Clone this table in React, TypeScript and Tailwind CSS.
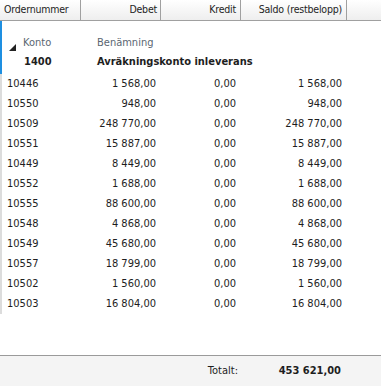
import React from "react";

const rows: [string, string, string, string][] = [
  ["10446", "1 568,00", "0,00", "1 568,00"],
  ["10550", "948,00", "0,00", "948,00"],
  ["10509", "248 770,00", "0,00", "248 770,00"],
  ["10551", "15 887,00", "0,00", "15 887,00"],
  ["10449", "8 449,00", "0,00", "8 449,00"],
  ["10552", "1 688,00", "0,00", "1 688,00"],
  ["10555", "88 600,00", "0,00", "88 600,00"],
  ["10548", "4 868,00", "0,00", "4 868,00"],
  ["10549", "45 680,00", "0,00", "45 680,00"],
  ["10557", "18 799,00", "0,00", "18 799,00"],
  ["10502", "1 560,00", "0,00", "1 560,00"],
  ["10503", "16 804,00", "0,00", "16 804,00"],
];

export default function App() {
  return (
    <div
      className="w-[381px] h-[386px] bg-white flex flex-col text-[11px] text-[#1e1e1e] overflow-hidden"
      style={{ fontFamily: '"DejaVu Sans Condensed", "DejaVu Sans", sans-serif' }}
    >
      {/* Header */}
      <div className="h-[21px] flex shrink-0 border-b border-[#a0a0a0] bg-gradient-to-b from-white to-[#eeeeee] text-[10.5px] tracking-[-0.2px]">
        <div className="w-[81px] border-r border-[#a0a0a0] flex items-center pl-[4px]">Ordernummer</div>
        <div className="w-[80px] border-r border-[#a0a0a0] flex items-center justify-end pr-[3px]">Debet</div>
        <div className="w-[80px] border-r border-[#a0a0a0] flex items-center justify-end pr-[4px]">Kredit</div>
        <div className="w-[106px] border-r border-[#a0a0a0] flex items-center justify-end pr-[4px]">Saldo (restbelopp)</div>
        <div className="flex-1" />
      </div>

      {/* Body */}
      <div className="flex-1 flex flex-col">
        {/* Group header */}
        <div className="h-[53px] border-l-2 border-[#1e8fe1] flex flex-col shrink-0">
          <div className="h-[14px]" />
          <div className="h-[16px] flex items-center relative">
            <svg className="absolute left-[7px] top-[9px]" width="7" height="7" viewBox="0 0 7 7">
              <polygon points="7,0 7,7 0,7" fill="#222" />
            </svg>
            <div className="w-[95px] pl-[21px] text-[#5b6672]">Konto</div>
            <div className="text-[#5b6672]">Benämning</div>
          </div>
          <div className="h-[22px] flex items-center font-bold">
            <div className="w-[95px] pl-[22px]">1400</div>
            <div>Avräkningskonto inleverans</div>
          </div>
        </div>
        {/* Rows */}
        <div className="border-l-2 border-[#dcdcdc] flex flex-col">
          {rows.map((r) => (
            <div key={r[0]} className="h-[20px] flex items-center">
              <div className="w-[79px] pl-[5px]">{r[0]}</div>
              <div className="w-[80px] text-right pr-[5px]">{r[1]}</div>
              <div className="w-[80px] text-right pr-[5px]">{r[2]}</div>
              <div className="w-[106px] text-right pr-[5px]">{r[3]}</div>
            </div>
          ))}
        </div>
        <div className="flex-1" />
      </div>

      {/* Footer */}
      <div className="h-[31px] shrink-0 border-t border-[#9a9a9a] bg-[#f4f4f4] flex items-center">
        <div className="w-[161px]" />
        <div className="w-[80px] text-right pr-[3px]">Totalt:</div>
        <div className="w-[106px] text-right pr-[6px] font-bold">453 621,00</div>
      </div>
    </div>
  );
}
